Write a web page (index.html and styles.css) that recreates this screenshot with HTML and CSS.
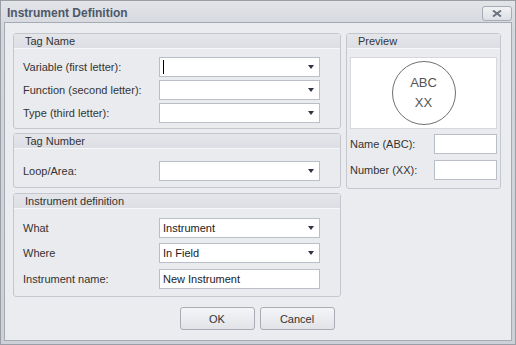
FILE: index.html
```html
<!DOCTYPE html>
<html lang="en">
<head>
    <meta charset="UTF-8">
    <title>Instrument Definition</title>
    <link rel="stylesheet" href="styles.css">
</head>
<body>
    <div class="window">
        <div class="titlebar">
            <span class="title">Instrument Definition</span>
            <button class="close-btn" title="Close">
                <svg width="10" height="7" viewBox="0 0 10 7">
                    <path d="M1 0.5 L9 6.5 M9 0.5 L1 6.5" stroke="#6c7482" stroke-width="2" fill="none"/>
                </svg>
            </button>
        </div>

        <div class="content">
            <div class="main">
                <div class="left-col">
                    <!-- Tag Name -->
                    <div class="group tag-name">
                        <div class="group-header">Tag Name</div>
                        <div class="group-body form-grid">
                            <label>Variable (first letter):</label>
                            <div class="combo"><span class="caret"></span><span class="arrow"></span></div>
                            <label>Function (second letter):</label>
                            <div class="combo"><span class="arrow"></span></div>
                            <label>Type (third letter):</label>
                            <div class="combo"><span class="arrow"></span></div>
                        </div>
                    </div>

                    <!-- Tag Number -->
                    <div class="group tag-number">
                        <div class="group-header">Tag Number</div>
                        <div class="group-body form-grid">
                            <label>Loop/Area:</label>
                            <div class="combo"><span class="arrow"></span></div>
                        </div>
                    </div>

                    <!-- Instrument definition -->
                    <div class="group instrument-def">
                        <div class="group-header">Instrument definition</div>
                        <div class="group-body form-grid">
                            <label>What</label>
                            <div class="combo"><span class="value">Instrument</span><span class="arrow"></span></div>
                            <label>Where</label>
                            <div class="combo"><span class="value">In Field</span><span class="arrow"></span></div>
                            <label>Instrument name:</label>
                            <div class="combo text-input"><span class="value">New Instrument</span></div>
                        </div>
                    </div>
                </div>

                <div class="right-col">
                    <!-- Preview -->
                    <div class="group preview">
                        <div class="group-header">Preview</div>
                        <div class="group-body">
                            <div class="preview-box">
                                <div class="bubble">
                                    <span>ABC</span>
                                    <span>XX</span>
                                </div>
                            </div>
                            <div class="preview-row">
                                <label>Name (ABC):</label>
                                <div class="small-input"></div>
                            </div>
                            <div class="preview-row">
                                <label>Number (XX):</label>
                                <div class="small-input"></div>
                            </div>
                        </div>
                    </div>
                </div>
            </div>

            <div class="buttons">
                <button class="btn">OK</button>
                <button class="btn">Cancel</button>
            </div>
        </div>
    </div>
</body>
</html>
```

FILE: styles.css
```css
body {
    margin: 0;
    font-family: "Liberation Sans", Arial, sans-serif;
    font-size: 11px;
    color: #333;
}

.window {
    width: 516px;
    height: 345px;
    box-sizing: border-box;
    border: 1px solid #9a9ea7;
    background: linear-gradient(#e2e4e8, #d3d6dc 30px, #cdd0d6);
    display: flex;
    flex-direction: column;
}

.titlebar {
    height: 21px;
    display: flex;
    align-items: center;
    justify-content: space-between;
    padding: 0 3px 0 6px;
}

.title {
    font-size: 12px;
    font-weight: bold;
    color: #4e5868;
    padding-top: 2px;
}

.close-btn {
    width: 30px;
    height: 15px;
    margin-top: 4px;
    padding: 0;
    border: 1px solid #a8abb3;
    border-radius: 3px;
    background: linear-gradient(#f1f2f4, #dcdfe4);
    display: flex;
    align-items: center;
    justify-content: center;
}

.content {
    flex: 1;
    margin: 0 3px 3px 3px;
    border: 1px solid #a6aab2;
    background: #ebecef;
    padding: 10px 10px 0 8px;
}

.main {
    display: flex;
    gap: 5px;
}

.left-col {
    width: 328px;
    display: flex;
    flex-direction: column;
}

.right-col {
    width: 155px;
}

.group {
    box-sizing: border-box;
    border: 1px solid #c4c7ce;
    border-radius: 3px;
    background: #eaebee;
}

.group-header {
    height: 14px;
    line-height: 15px;
    padding-left: 11px;
    background: linear-gradient(#e4e6ea, #dddfe4);
    border-bottom: 1px solid #f6f7f9;
    color: #333;
}

.form-grid {
    display: grid;
    grid-template-columns: 136px 161px;
    align-items: center;
    padding-left: 9px;
}

.tag-name .group-body {
    padding-top: 8px;
    padding-bottom: 5px;
    row-gap: 3px;
}

.tag-number {
    margin-top: 4px;
}

.tag-number .group-body {
    padding-top: 12px;
    padding-bottom: 6px;
}

.instrument-def {
    margin-top: 5px;
}

.instrument-def .group-body {
    padding-top: 9px;
    padding-bottom: 7px;
    row-gap: 5px;
}

.instrument-def .text-input {
    margin-top: 1px;
}

.combo {
    position: relative;
    box-sizing: border-box;
    height: 20px;
    border: 1px solid #babec6;
    background: #fff;
    display: flex;
    align-items: center;
    padding-left: 3px;
    color: #222;
}

.caret {
    width: 1px;
    height: 14px;
    background: #000;
}

.arrow {
    position: absolute;
    right: 5px;
    top: 7px;
    border-left: 3px solid transparent;
    border-right: 3px solid transparent;
    border-top: 4px solid #2e3440;
}

.preview .group-body {
    padding: 8px 3px 8px 3px;
}

.preview-box {
    height: 72px;
    box-sizing: border-box;
    border: 1px solid #d6d8dd;
    background: #fff;
    display: flex;
    align-items: center;
    justify-content: center;
}

.bubble {
    width: 64px;
    height: 64px;
    box-sizing: border-box;
    border: 1px solid #707070;
    border-radius: 50%;
    display: flex;
    flex-direction: column;
    align-items: center;
    justify-content: center;
    font-size: 13px;
    line-height: 20px;
    color: #555;
}

.preview-row {
    display: flex;
    align-items: center;
    justify-content: space-between;
    margin-top: 5px;
}

.preview-row + .preview-row {
    margin-top: 6px;
}

.small-input {
    width: 63px;
    height: 20px;
    box-sizing: border-box;
    border: 1px solid #babec6;
    background: #fff;
}

.buttons {
    display: flex;
    justify-content: center;
    gap: 5px;
    margin-top: 10px;
}

.btn {
    width: 75px;
    height: 23px;
    font-family: "Liberation Sans", Arial, sans-serif;
    font-size: 11px;
    color: #333;
    border: 1px solid #a9acb4;
    border-radius: 3px;
    background: linear-gradient(#f4f5f7, #e1e3e7);
    padding: 0;
}
```
